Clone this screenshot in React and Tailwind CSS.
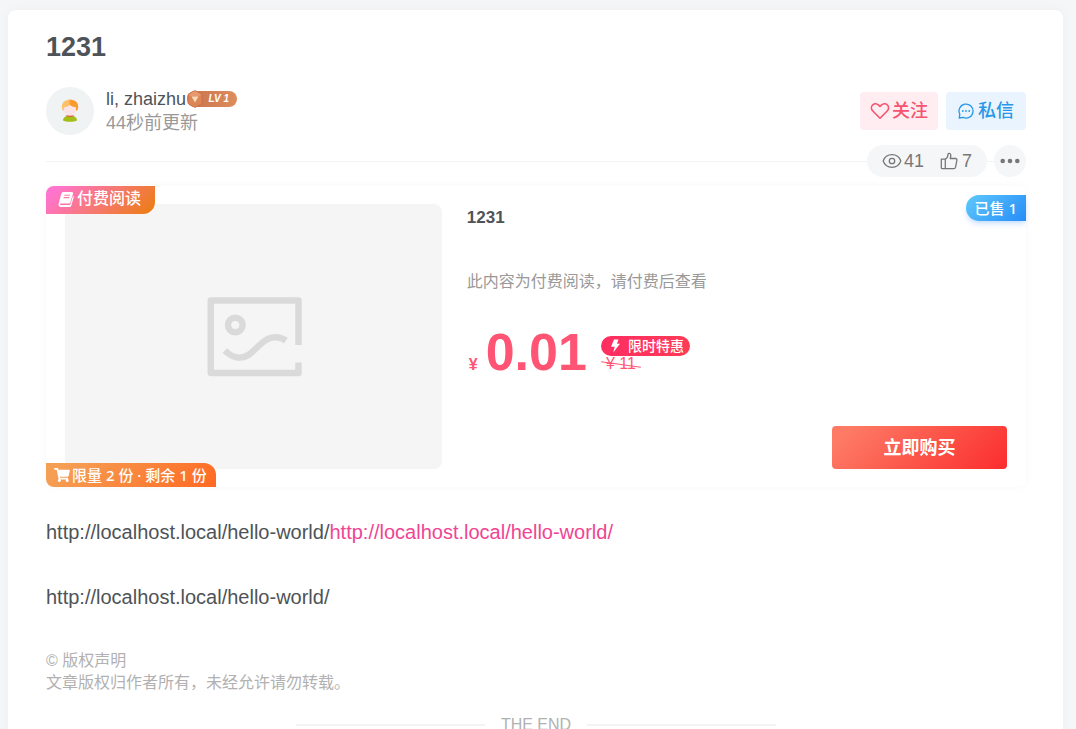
import { useState } from 'react';
import { FaShoppingCart } from 'react-icons/fa';
import clsx from 'clsx';

const POST_URL = 'http://localhost.local/hello-world/';

function Avatar() {
  return (
    <div className="flex h-12 w-12 shrink-0 items-center justify-center rounded-full bg-[#eff3f3]">
      <svg viewBox="0 0 18 24" className="h-6 w-[18px]">
        <path d="M2 21.500c0-3 2.500-4.700 7-4.700s7 1.700 7 4.700c-2.500 1.800-11.500 1.800-14 0z" fill="#a3bf18" />
        <path d="M4.500 16.800c1.500-.7 7.500-.7 9 0-1 1.500-8 1.500-9 0z" fill="#e2574a" />
        <path d="M7 12.500h4v3.700c-1 .8-3 .8-4 0z" fill="#f8d5d0" />
        <path d="M1.200 10.500C-.3 4 3.500.8 9 .8s9.300 3.200 7.800 9.700L15 12H3z" fill="#fbc06a" />
        <path d="M8.500.8c6 0 9.800 3.200 8.300 9.700L15 12 8.500 6z" fill="#fb9a2e" />
        <path d="M2.800 8.200c3 0 4.900-.9 6-2.400 1.500 1.600 3.400 2.400 6.200 2.400v3.300c0 3-2.500 4.500-6 4.500s-6.200-1.500-6.200-4.500z" fill="#fbe3e6" />
      </svg>
    </div>
  );
}

function LevelBadge() {
  return (
    <span className="relative flex h-4 w-[50px] items-center justify-end rounded-full bg-gradient-to-r from-[#c9724c] to-[#dd8d5c] pr-2">
      <svg viewBox="0 0 16 18" className="absolute -top-px left-0 h-[18px] w-4">
        <path d="M8 .5l7 4v9l-7 4-7-4v-9z" fill="#dc8656" stroke="#c56f48" strokeWidth="0.800" />
        <path d="M8 1l6.500 3.700L12 6H4L1.500 4.700z" fill="#e79a6d" />
        <path d="M4.500 6.500h7L8 12.500z" fill="#fbd9ba" />
      </svg>
      <span className="text-[10px] font-bold italic leading-4 text-white">LV 1</span>
    </span>
  );
}

function HeartIcon() {
  return (
    <svg viewBox="0 0 20 18" className="h-[18px] w-5" fill="none" stroke="currentColor" strokeWidth="1.600" strokeLinejoin="round">
      <path d="M10 16.200L2.800 9C1 7.200 1 4.600 2.600 3c1.700-1.700 4.300-1.600 6 .1L10 4.500l1.400-1.400c1.700-1.700 4.300-1.800 6-.1 1.600 1.600 1.600 4.200-.2 6z" />
    </svg>
  );
}

function MessageIcon() {
  return (
    <svg viewBox="0 0 16 16" className="h-4 w-4" fill="none" stroke="currentColor" strokeWidth="1.300" strokeLinejoin="round">
      <path d="M1.200 15l.6-3.700A7 7 0 1 1 5 14.400z" />
      <g fill="currentColor" stroke="none">
        <circle cx="4.800" cy="8" r="0.900" />
        <circle cx="8" cy="8" r="0.900" />
        <circle cx="11.200" cy="8" r="0.900" />
      </g>
    </svg>
  );
}

function EyeIcon() {
  return (
    <svg viewBox="0 0 20 16" className="h-4 w-5" fill="none" stroke="currentColor" strokeWidth="1.300">
      <path d="M1.200 8C2.600 4 6 1.700 10 1.700S17.400 4 18.800 8c-1.400 4-4.800 6.300-8.800 6.300S2.600 12 1.200 8z" />
      <circle cx="10" cy="8" r="2.700" />
    </svg>
  );
}

function ThumbIcon() {
  return (
    <svg viewBox="0 0 18 18" className="h-[18px] w-[18px]" fill="none" stroke="currentColor" strokeWidth="1.300" strokeLinejoin="round">
      <path d="M1.300 7.200h4v9.500h-3a1 1 0 0 1-1-1z" />
      <path d="M5.300 7.200C7.300 6 8 4.500 8 2.500 8 1 10.800.7 10.800 3.200c0 1.300-.3 2.400-.6 3.300h5.300c1 0 1.600.8 1.400 1.700l-1.400 7.200c-.2.800-.7 1.300-1.500 1.300H5.300" />
    </svg>
  );
}

function BookIcon() {
  return (
    <svg viewBox="0 0 16 16" className="h-4 w-4">
      <path
        d="M5.500 1h8.300c.9 0 1.500.8 1.200 1.700l-2.600 8.600c-.3.900-.9 1.300-1.800 1.300H2.800c-.6 0-.9.300-.7.800.1.400.5.600 1.200.6h7.900c.7 0 1.100-.3 1.300-1l2.500-8.200c.7.400.9 1 .7 1.700l-2.400 7.900c-.3 1-1.100 1.600-2 1.600H3c-1.500 0-2.700-1.200-2.500-2.700L3.300 2.800C3.600 1.700 4.400 1 5.500 1z"
        fill="currentColor"
      />
      <path d="M6.300 4.200h5.700M5.600 6.600h5.700" stroke="#f77da4" strokeWidth="1.100" />
    </svg>
  );
}

function ImagePlaceholder() {
  return (
    <div className="flex h-[265px] w-2/5 shrink-0 items-center justify-center rounded-lg bg-[#f5f5f5]">
      <svg viewBox="13 17 100 82" className="h-[82px] w-[100px]" fill="none" stroke="#dadada" strokeWidth="6.500">
        <path d="M108.500 66V21.500H20.800V94h87.700V83.500" strokeLinejoin="round" />
        <circle cx="45.300" cy="46" r="7.300" />
        <path d="M34.800 71.500C42 78.500 51 81 59 75.500c8-5.500 13-14.500 22.500-16.800 5-1.200 10-.2 14.500 2.800" />
      </svg>
    </div>
  );
}

function AuthorRow() {
  const [followed, setFollowed] = useState(false);

  return (
    <div className="mt-6 flex items-center justify-between">
      <div className="flex items-center gap-3">
        <Avatar />
        <div>
          <div className="flex items-center gap-px text-lg leading-6">
            <a href="#author">li, zhaizhu</a>
            <LevelBadge />
          </div>
          <p className="text-lg leading-6 text-[#999]">44秒前更新</p>
        </div>
      </div>

      <div className="flex gap-2 text-lg leading-6">
        <button
          onClick={() => setFollowed(!followed)}
          className={clsx(
            'flex h-[38px] items-center gap-0.5 rounded bg-[#ffedf1] px-[10px] font-medium text-[#f6536f]',
            followed && 'opacity-70'
          )}
        >
          <HeartIcon />
          关注
        </button>
        <button className="flex h-[38px] items-center gap-1 rounded bg-[#e9f4fe] px-3 font-medium text-[#2997e7]">
          <MessageIcon />
          私信
        </button>
      </div>
    </div>
  );
}

function StatsRow() {
  return (
    <div className="mt-[10px] flex h-8 items-center text-lg text-[#777]">
      <div className="h-px flex-1 bg-[#f2f3f3]" />
      <div className="flex h-8 items-center gap-4 rounded-full bg-[#f5f6f7] px-[15px]">
        <span className="flex items-center gap-0.5">
          <EyeIcon />
          41
        </span>
        <button className="flex items-center gap-1">
          <ThumbIcon />7
        </button>
      </div>
      <div className="h-px w-[7px] bg-[#f2f3f3]" />
      <button aria-label="更多" className="flex h-8 w-8 items-center justify-center rounded-full bg-[#f5f6f7]">
        <svg viewBox="0 0 20 6" className="h-[6px] w-5" fill="currentColor">
          <circle cx="2.700" cy="3" r="2.300" />
          <circle cx="10" cy="3" r="2.300" />
          <circle cx="17.300" cy="3" r="2.300" />
        </svg>
      </button>
    </div>
  );
}

function PayPanel() {
  return (
    <section className="relative mt-[9px] flex gap-[25px] rounded-lg px-[19px] py-[18px] shadow-[0_0_10px_rgba(0,0,0,0.03)]">
      <ImagePlaceholder />

      <div className="flex min-w-0 flex-1 flex-col">
        <h2 className="pt-0.5 text-[17px] font-bold leading-6">1231</h2>
        <p className="mt-10 text-base leading-6 text-[#999]">此内容为付费阅读，请付费后查看</p>

        <div className="mt-8 flex h-[52px] text-[#ff5473]">
          <div className="flex items-baseline gap-2 pl-0.5 font-bold leading-[52px]">
            <span className="text-base leading-[52px]">¥</span>
            <span className="text-[52px]">0.01</span>
          </div>
          <div className="ml-[14px] flex flex-col items-start pt-[10px]">
            <span className="flex h-5 items-center gap-[7px] rounded-full bg-gradient-to-r from-[#ff2d62] to-[#ff3b55] pl-2 pr-[6px] text-sm font-medium leading-5 text-white">
              <svg viewBox="0 0 12 14" className="h-[14px] w-3" fill="currentColor">
                <path d="M5 .5h4.500L8 4.800h3L4.200 13.500l1.500-5.800H2z" />
              </svg>
              限时特惠
            </span>
            <span className="relative px-[5px] text-base leading-4">
              ¥ 11
              <span className="absolute inset-x-0 top-2 h-px rotate-[8deg] bg-[#ff5473]" />
            </span>
          </div>
        </div>

        <button className="mt-auto h-[43px] w-[175px] self-end rounded bg-[linear-gradient(135deg,#fd7a64_10%,#fb2d2d_100%)] text-lg font-bold leading-6 text-white">
          立即购买
        </button>
      </div>

      {/* Corner badges */}
      <div className="absolute left-0 top-0 flex h-7 items-center gap-[3px] rounded-br-xl rounded-tl-lg bg-[linear-gradient(135deg,#ff74cd_10%,#ec7d0b_100%)] pb-0.5 pl-3 pr-[14px] text-base font-medium leading-6 text-white">
        <BookIcon />
        付费阅读
      </div>
      <div className="absolute right-0 top-[9px] flex h-[26px] items-center rounded-l-full bg-[linear-gradient(135deg,#59c3fb_10%,#268df7_100%)] px-[9px] font-['Noto_Sans','Noto_Sans_CJK_SC',sans-serif] text-[15px] font-medium leading-6 text-white shadow-md shadow-blue-500/20">
        已售 1
      </div>
      <div className="absolute bottom-0 left-0 flex h-6 items-center gap-0.5 rounded-bl-lg rounded-tr-xl bg-[linear-gradient(135deg,#f59f54_10%,#ff6922_100%)] pl-2 pr-[9px] font-['Noto_Sans','Noto_Sans_CJK_SC',sans-serif] text-[15px] font-medium leading-6 text-white">
        <FaShoppingCart className="h-[14px] w-4" />
        限量 2 份 · 剩余 1 份
      </div>
    </section>
  );
}

export default function App() {
  return (
    <div className="min-h-screen bg-[#f4f6f7] pl-2 pr-[13px] pt-[10px] font-['Liberation_Sans','Noto_Sans_CJK_SC',sans-serif] text-[#4e5358]">
      <article className="rounded-lg bg-white pb-10 pl-[38px] pr-[37px] pt-[21px] shadow-[0_0_10px_rgba(116,116,116,0.06)]">
        <h1 className="text-[27px] font-bold leading-8">1231</h1>
        <AuthorRow />
        <StatsRow />
        <PayPanel />

        <div className="mt-[29px] space-y-[33px] text-xl leading-8">
          <p>
            {POST_URL}
            <a href={POST_URL} className="text-[#f04494]">
              {POST_URL}
            </a>
          </p>
          <p>{POST_URL}</p>
        </div>

        <div className="mt-[37px] text-base leading-[22px] text-[#b1b1b1]">
          <p>© 版权声明</p>
          <p>文章版权归作者所有，未经允许请勿转载。</p>
        </div>

        <div className="mx-auto mt-5 flex w-[49%] items-center gap-4 text-base leading-[22px] text-[#b1b1b1]">
          <div className="h-0.5 flex-1 bg-[#f2f3f3]" />
          THE END
          <div className="h-0.5 flex-1 bg-[#f2f3f3]" />
        </div>
      </article>
    </div>
  );
}
